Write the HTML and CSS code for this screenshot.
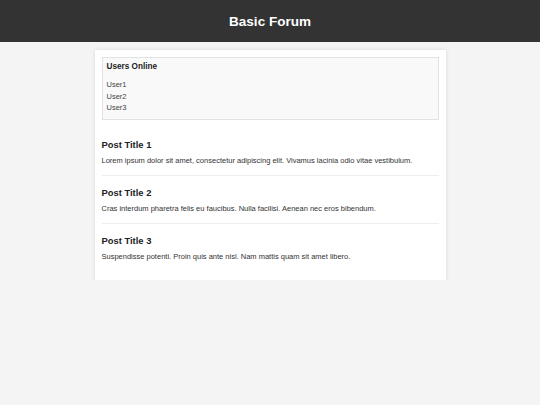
FILE: index.html
```html
<!DOCTYPE html>
<html lang="en">
	<head>
		<meta charset="UTF-8" />
		<title>Basic Forum</title>
		<meta name="viewport" content="width=device-width,initial-scale=1" />
		<link rel="stylesheet" href="styles.css">
	</head>
	<body>
		<header class="site-header">
			<h1>Basic Forum</h1>
		</header>
		<main class="forum">
			<section class="online">
				<h2>Users Online</h2>
				<ul>
					<li>User1</li>
					<li>User2</li>
					<li>User3</li>
				</ul>
			</section>
			<article class="post">
				<h3>Post Title 1</h3>
				<p>Lorem ipsum dolor sit amet, consectetur adipiscing elit. Vivamus lacinia odio vitae vestibulum.</p>
			</article>
			<article class="post">
				<h3>Post Title 2</h3>
				<p>Cras interdum pharetra felis eu faucibus. Nulla facilisi. Aenean nec eros bibendum.</p>
			</article>
			<article class="post">
				<h3>Post Title 3</h3>
				<p>Suspendisse potenti. Proin quis ante nisl. Nam mattis quam sit amet libero.</p>
			</article>
		</main>
	</body>
</html>
```

FILE: styles.css
```css
body{
	margin:0;
	background-color:#f4f4f4;
	color:#333;
	font-family:"Liberation Sans",Arial,sans-serif;
}
.site-header{
	display:flex;
	align-items:center;
	justify-content:center;
	height:42px;
	background-color:#333;
	color:#fff;
}
.site-header h1{
	margin:0;
	padding-top:1px;
	font-size:13.5px;
	line-height:16px;
}
.forum{
	box-sizing:border-box;
	width:351px;
	margin:8px auto 0;
	padding:7px 7px 8px;
	background-color:#fff;
	box-shadow:0 0 4px rgba(0,0,0,0.12);
}
/* who is online */
.online{
	padding:4px 5px 5px 4px;
	background-color:#f9f9f9;
	border:1px solid #e2e2e2;
}
.online h2{
	margin:0 0 7px;
	font-size:8.2px;
	line-height:10px;
	color:#222;
}
.online ul{
	margin:0;
	padding:0;
	list-style:none;
	font-size:7.5px;
	line-height:11.5px;
	color:#444;
}
.post{
	padding:11px 0 10px;
	border-bottom:1px solid #eee;
}
.online+.post{
	margin-top:8px;
}
.post:last-child{
	border-bottom:none;
}
.post h3{
	margin:0 0 5px;
	font-size:9.4px;
	line-height:11px;
	color:#222;
}
.post p{
	margin:0;
	font-size:7.5px;
	line-height:11px;
	color:#333;
}
.post:not(:last-child) p{
	margin-bottom:-1px;
}
```
